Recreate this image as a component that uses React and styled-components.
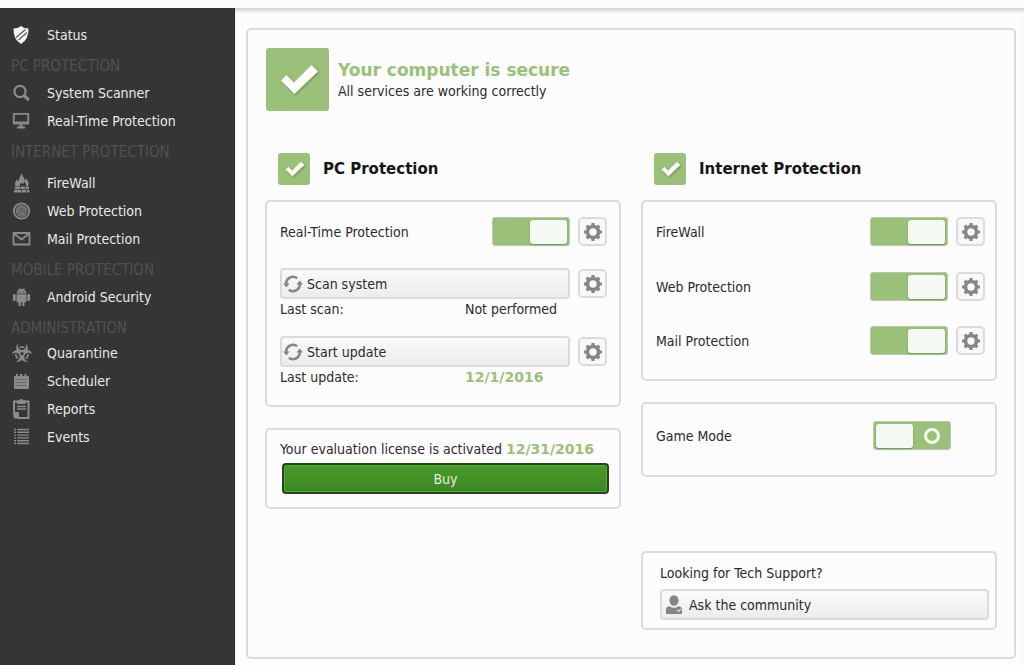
import React from "react";
import styled, { createGlobalStyle } from "styled-components";
import { FaBiohazard } from "react-icons/fa";

const GREEN = "#9bc07a";
const LINE = "#dadbda";

const GlobalStyle = createGlobalStyle`
  *, *::before, *::after { box-sizing: border-box; }
  body {
    margin: 0;
    background: #fcfcfc;
    color: #2b2b2b;
    font: 14px/20px "DejaVu Sans Condensed", Tahoma, "DejaVu Sans", sans-serif;
  }
  h1, h2, h3, p, ul, dl, dd { margin: 0; padding: 0; }
  button { font: inherit; color: inherit; cursor: pointer; }
`;

const Shell = styled.div`
  display: flex;
  min-height: 100vh;
  padding-top: 8px;
`;

const Sidebar = styled.nav`
  flex: 0 0 235px;
  padding-top: 13px;
  background: #353535;
  border-right: 1px solid #242424;
`;

const NavHeading = styled.h3`
  padding: 7px 0 0 11px;
  margin-bottom: ${(p) => p.$gap}px;
  font-size: 15px;
  line-height: 20px;
  font-weight: 400;
  color: #525052;
`;

const NavList = styled.ul`
  list-style: none;
`;

const NavLink = styled.a`
  display: flex;
  align-items: center;
  gap: 15px;
  height: 28px;
  padding-left: 12px;
  color: #e9e9e9;
  text-decoration: none;
  svg { flex: none; color: #8b8b8b; }
`;

const Main = styled.main`
  flex: 1;
  display: flex;
  min-width: 0;
  padding: 20px 8px 6px 11px;
  box-shadow: inset 0 5px 5px -3px #c4c4c4;
`;

const Panel = styled.section`
  flex: 1;
  min-width: 0;
  padding: 18px 17px;
  border: 2px solid ${LINE};
  border-radius: 5px;
`;

const Hero = styled.header`
  display: flex;
  align-items: center;
  gap: 9px;
  padding-left: 1px;
  margin-bottom: 42px;
  color: #2b2b2b;
`;

const HeroTitle = styled.h1`
  font-family: "DejaVu Sans", Verdana, sans-serif;
  font-size: 17px;
  line-height: 22px;
  font-weight: 700;
  color: ${GREEN};
`;

const CheckTile = styled.span`
  display: flex;
  flex: none;
  width: ${(p) => p.$size}px;
  height: ${(p) => p.$size}px;
  border-radius: 3px;
  background: ${GREEN};
  svg { width: 100%; height: 100%; filter: drop-shadow(1px 1px 1px #6d9150); }
`;

const Columns = styled.div`
  display: grid;
  grid-template-columns: 1fr 1fr;
  gap: 20px;
`;

const Column = styled.div`
  display: flex;
  flex-direction: column;
  gap: 21px;
  min-width: 0;
`;

const Group = styled.section``;

const GroupHead = styled.header`
  display: flex;
  align-items: center;
  gap: 13px;
  padding-left: 13px;
  margin-bottom: 15px;
`;

const GroupTitle = styled.h2`
  font-family: "DejaVu Sans", Verdana, sans-serif;
  font-size: 15px;
  line-height: 22px;
  font-weight: 700;
  color: #161616;
`;

const Card = styled.div`
  padding: ${(p) => p.$pad || "15px 12px"};
  margin-top: ${(p) => p.$push || 0}px;
  border: 2px solid ${LINE};
  border-radius: 5px;
`;

const Row = styled.div`
  display: flex;
  align-items: center;
  gap: 8px;
  margin-bottom: ${(p) => p.$after || 0}px;
`;

const SwitchLabel = styled.label`
  flex: 1;
`;

const Switch = styled.input.attrs({ type: "checkbox", role: "switch" })`
  appearance: none;
  display: flex;
  align-items: center;
  justify-content: space-between;
  width: 78px;
  height: 29px;
  margin: 0;
  padding: 1px 2px;
  border: 1px solid #b9c9ad;
  border-radius: 3px;
  background: ${GREEN};
  cursor: pointer;
  &::before {
    content: "";
    width: 37px;
    height: 24px;
    border-radius: 3px;
    background: #f5f9f3;
    box-shadow: 0 1px 2px 0 #6f9355;
  }
  &::after {
    content: "";
    width: 16px;
    height: 16px;
    margin-right: 8px;
    border: 3px solid #f6faf3;
    border-radius: 50%;
  }
  &:checked { justify-content: flex-end; }
  &:checked::after { display: none; }
`;

const GearButton = styled.button`
  display: flex;
  align-items: center;
  justify-content: center;
  flex: none;
  width: 29px;
  height: 29px;
  padding: 0;
  border: 2px solid ${LINE};
  border-radius: 5px;
  background: #f9f9f9;
  color: #868686;
`;

const WideButton = styled.button`
  display: flex;
  align-items: center;
  flex: 1;
  gap: 4px;
  width: 100%;
  height: 31px;
  padding: 0 1px;
  border: 2px solid ${LINE};
  border-radius: 4px;
  background: linear-gradient(#fafafa, #ececec);
  text-align: left;
  svg { flex: none; color: #858585; }
`;

const Facts = styled.dl`
  display: grid;
  grid-template-columns: 185px 1fr;
  margin-bottom: ${(p) => p.$after || 0}px;
`;

const Strong = styled.strong`
  font-family: "DejaVu Sans", Verdana, sans-serif;
  font-weight: 700;
  color: ${GREEN};
`;

const BuyButton = styled.button`
  display: block;
  width: calc(100% - 2px);
  height: 31px;
  margin: 4px 0 0 2px;
  border: 2px solid #27431d;
  border-radius: 4px;
  background: linear-gradient(#489b2b, #3c8625);
  box-shadow: inset 0 0 0 1px #4fae2e;
  color: #e3efdc;
`;

function Glyph({ name }) {
  const shared = { width: 20, height: 20, viewBox: "0 0 20 20", fill: "currentColor", "aria-hidden": true };
  switch (name) {
    case "shield":
      return (
        <svg {...shared}>
          <path fill="#f4f4f4" d="M1.500 3.500Q6 3.500 9 1q3 2.500 7.500 2.500Q17 14 9 19 1 14 1.500 3.500Z" />
          <path stroke="#5a5a5a" strokeWidth="1.200" d="M4 12.500 13.500 4.500M6.500 15 15 7.500" />
        </svg>
      );
    case "search":
      return (
        <svg {...shared} fill="none" stroke="currentColor">
          <circle cx="8" cy="8.500" r="5.600" strokeWidth="2.200" />
          <path strokeWidth="3.400" strokeLinecap="round" d="m13 13.300 2.800 2.800" />
        </svg>
      );
    case "monitor":
      return (
        <svg {...shared}>
          <path fillRule="evenodd" d="M1.800 2h14.400q1 0 1 1v9.500q0 1-1 1H1.800q-1 0-1-1V3q0-1 1-1Zm.900 1.800v6.800h12.600V3.800Z" />
          <path d="M7.500 13.500h3v2H13v2H5v-2h2.500Z" />
        </svg>
      );
    case "firewall":
      return (
        <svg {...shared}>
          <path d="M3.500 13C2 9.500 4.500 8.500 4.500 6c1 .8 1.300 2 1.200 3C7.500 7 7.500 3.500 10 0c-.3 3 2.500 4.500 2.800 7.500.9-.6 1-1.600.9-2.500C16 7.500 17.500 10 16 13h-2c.4-2-1-3-1.500-4.500-.5 1.500-1.500 1.500-1.700 3-.8-.5-1-1.200-1-2C8.500 10.500 7.500 11.500 8 13Z" />
          <path d="M3 13.600h5v2.500H3zM8.600 13.600H13v2.500H8.600zM13.600 13.600H17v2.500h-3.400zM2 16.800h7v2.700H2zM9.600 16.800H14v2.700H9.600zM14.600 16.800H17.500v2.700h-2.900z" />
        </svg>
      );
    case "web":
      return (
        <svg {...shared} fill="none" stroke="currentColor">
          <circle cx="9.500" cy="10" r="7.700" strokeWidth="1.800" />
          <circle cx="9.500" cy="10" r="5.900" fill="currentColor" stroke="none" opacity="0.750" />
          <path stroke="#5a5a5a" strokeWidth="0.800" d="m9.500 10 1-5M9.500 10l5 1M9.500 10l-4 3.500M9.500 10 5 7.500M6.500 6.500q2 2 5.500 1M6 12q2 1 4 3M12.500 8q-1 3 0 5" />
        </svg>
      );
    case "mail":
      return (
        <svg {...shared} fill="none" stroke="currentColor" strokeWidth="1.800">
          <path d="M1.500 4h16v11.500h-16ZM2 4.500l7.500 6 7.500-6" />
        </svg>
      );
    case "android":
      return (
        <svg {...shared}>
          <path d="M4.500 6.500q.3-3 2.500-4.200L6.200 1l.6-.4.900 1.400q1.800-.6 3.600 0l.9-1.400.6.4L12 2.300q2.200 1.200 2.500 4.200Z" />
          <path d="M4.500 7.300h10V14q0 1.200-1.200 1.200h-.8V18q0 1.300-1.200 1.300T10.200 18v-2.800H8.800V18q0 1.300-1.200 1.300T6.400 18v-2.800h-.7Q4.500 15.200 4.500 14ZM.900 8.200q0-1.300 1.400-1.300t1.400 1.300v4.600q0 1.300-1.400 1.300t-1.400-1.300ZM15.300 8.200q0-1.300 1.400-1.300t1.400 1.300v4.600q0 1.300-1.400 1.300t-1.400-1.300Z" />
          <circle cx="7.300" cy="4.500" r=".6" fill="#353535" />
          <circle cx="11.700" cy="4.500" r=".6" fill="#353535" />
        </svg>
      );
    case "calendar":
      return (
        <svg {...shared}>
          <path d="M2.500 5H4V3h2v2h2V3h2.500v2h2V3h2v2H16q1 0 1 1v11q0 1-1 1H3q-1 0-1-1V6q0-1 .5-1Z" />
          <path stroke="#5a5a5a" strokeWidth="1" fill="none" strokeDasharray="2 1" d="M3.500 8.500h12M3.500 11.500h12M3.500 14.500h12" />
        </svg>
      );
    case "clipboard":
      return (
        <svg {...shared} fill="none" stroke="currentColor">
          <path strokeWidth="2" d="M2 2.500h14.500V19H6.500L2 14.500Z" />
          <path fill="currentColor" stroke="none" d="M5 1.500h2Q7.500 0 9.200 0t2.300 1.500h2V5H5ZM1.500 13H7v6.500H3q-1.500 0-1.500-1.500Z" />
          <path strokeWidth="1.300" d="M5 7.500h9M5 10h9" />
        </svg>
      );
    default:
      return (
        <svg {...shared} fill="none" stroke="currentColor" strokeWidth="1.400">
          <path strokeDasharray="2 1.200 11.800 20" d="M2 2.500h15" />
          <path strokeDasharray="2 1.200 11.800 20" d="M2 5.300h15" />
          <path strokeDasharray="2 1.200 11.800 20" d="M2 8.100h15" />
          <path strokeDasharray="2 1.200 11.800 20" d="M2 10.900h15" />
          <path strokeDasharray="2 1.200 11.800 20" d="M2 13.700h15" />
          <path strokeDasharray="2 1.200 11.800 20" d="M2 16.500h15" />
        </svg>
      );
  }
}

function Check() {
  return (
    <svg viewBox="0 0 63 63" aria-hidden="true">
      <path fill="#fff" d="m15 32.500 5.500-5.500 7.500 7.500L45.500 17l6.500 6.500L28.500 46Z" />
    </svg>
  );
}

function Gear() {
  return (
    <svg width="20" height="20" viewBox="0 0 20 20" fill="none" stroke="currentColor" aria-hidden="true">
      <circle cx="10" cy="10" r="5.500" strokeWidth="3.600" />
      <path
        strokeWidth="3.200"
        d="M10 1v3M10 16v3M1 10h3M16 10h3M3.700 3.700l2.100 2.100M14.200 14.200l2.100 2.100M3.700 16.300l2.100-2.100M14.200 5.800l2.100-2.100"
      />
    </svg>
  );
}

function Refresh() {
  return (
    <svg width="20" height="20" viewBox="0 0 20 20" aria-hidden="true">
      <path fill="none" stroke="currentColor" strokeWidth="2.600" d="M3.200 10A6.900 6.900 0 0 1 14.200 4.200M16.800 10A6.900 6.900 0 0 1 5.800 15.800" />
      <path fill="currentColor" d="M0 9.500h6.600L3.300 13.500ZM13.400 10.500 16.700 6.500 20 10.500Z" />
    </svg>
  );
}

function Person() {
  return (
    <svg width="22" height="22" viewBox="0 0 22 22" aria-hidden="true">
      <ellipse cx="11" cy="6.500" rx="4.600" ry="5.200" fill="currentColor" />
      <path fill="currentColor" d="M3 20v-4.500Q3 12.500 6.500 12.200q4.500 3.200 9 0Q19 12.500 19 15.500V20Z" />
      <path fill="none" stroke="#ddd" strokeWidth="1.200" d="m14 16 1.500 1.500L18 15" />
    </svg>
  );
}

const NAV = [
  { items: [["Status", "shield"]] },
  { title: "PC PROTECTION", gap: 3, items: [["System Scanner", "search"], ["Real-Time Protection", "monitor"]] },
  { title: "INTERNET PROTECTION", gap: 7, items: [["FireWall", "firewall"], ["Web Protection", "web"], ["Mail Protection", "mail"]] },
  { title: "MOBILE PROTECTION", gap: 3, items: [["Android Security", "android"]] },
  { title: "ADMINISTRATION", gap: 1, items: [["Quarantine", "biohazard"], ["Scheduler", "calendar"], ["Reports", "clipboard"], ["Events", "list"]] },
];

function NavIcon({ name }) {
  if (name === "biohazard") return <FaBiohazard size={20} aria-hidden="true" />;
  return <Glyph name={name} />;
}

function SwitchRow({ id, label, after }) {
  return (
    <Row $after={after}>
      <SwitchLabel htmlFor={id}>{label}</SwitchLabel>
      <Switch id={id} defaultChecked />
      <GearButton type="button" aria-label={label + " settings"}><Gear /></GearButton>
    </Row>
  );
}

function ActionRow({ label }) {
  return (
    <Row>
      <WideButton type="button"><Refresh />{label}</WideButton>
      <GearButton type="button" aria-label={label + " settings"}><Gear /></GearButton>
    </Row>
  );
}

function GroupHeader({ title }) {
  return (
    <GroupHead>
      <CheckTile $size={32}><Check /></CheckTile>
      <GroupTitle>{title}</GroupTitle>
    </GroupHead>
  );
}

export default function App() {
  return (
    <>
      <GlobalStyle />
      <Shell>
        <Sidebar>
          {NAV.map((section) => (
            <React.Fragment key={section.title || "top"}>
              {section.title && <NavHeading $gap={section.gap}>{section.title}</NavHeading>}
              <NavList>
                {section.items.map(([label, icon]) => (
                  <li key={label}>
                    <NavLink href="#"><NavIcon name={icon} />{label}</NavLink>
                  </li>
                ))}
              </NavList>
            </React.Fragment>
          ))}
        </Sidebar>
        <Main>
          <Panel>
            <Hero>
              <CheckTile $size={63}><Check /></CheckTile>
              <div>
                <HeroTitle>Your computer is secure</HeroTitle>
                <p>All services are working correctly</p>
              </div>
            </Hero>
            <Columns>
              <Column>
                <Group>
                  <GroupHeader title="PC Protection" />
                  <Card $pad="15px 12px 18px 13px">
                    <SwitchRow id="realtime" label="Real-Time Protection" after={22} />
                    <ActionRow label="Scan system" />
                    <Facts $after={17}>
                      <dt>Last scan:</dt>
                      <dd>Not performed</dd>
                    </Facts>
                    <ActionRow label="Start update" />
                    <Facts>
                      <dt>Last update:</dt>
                      <dd><Strong>12/1/2016</Strong></dd>
                    </Facts>
                  </Card>
                </Group>
                <Card $pad="9px 10px 13px 13px">
                  <p>Your evaluation license is activated <Strong>12/31/2016</Strong></p>
                  <BuyButton type="button">Buy</BuyButton>
                </Card>
              </Column>
              <Column>
                <Group>
                  <GroupHeader title="Internet Protection" />
                  <Card $pad="15px 10px 24px 13px">
                    <SwitchRow id="firewall" label="FireWall" after={26} />
                    <SwitchRow id="web" label="Web Protection" after={25} />
                    <SwitchRow id="mail" label="Mail Protection" />
                  </Card>
                </Group>
                <Card $pad="17px 44px 25px 13px">
                  <Row>
                    <SwitchLabel htmlFor="game">Game Mode</SwitchLabel>
                    <Switch id="game" />
                  </Row>
                </Card>
                <Card $push={53} $pad="10px 6px 8px 17px">
                  <Row $after={6}>Looking for Tech Support?</Row>
                  <WideButton type="button"><Person />Ask the community</WideButton>
                </Card>
              </Column>
            </Columns>
          </Panel>
        </Main>
      </Shell>
    </>
  );
}
